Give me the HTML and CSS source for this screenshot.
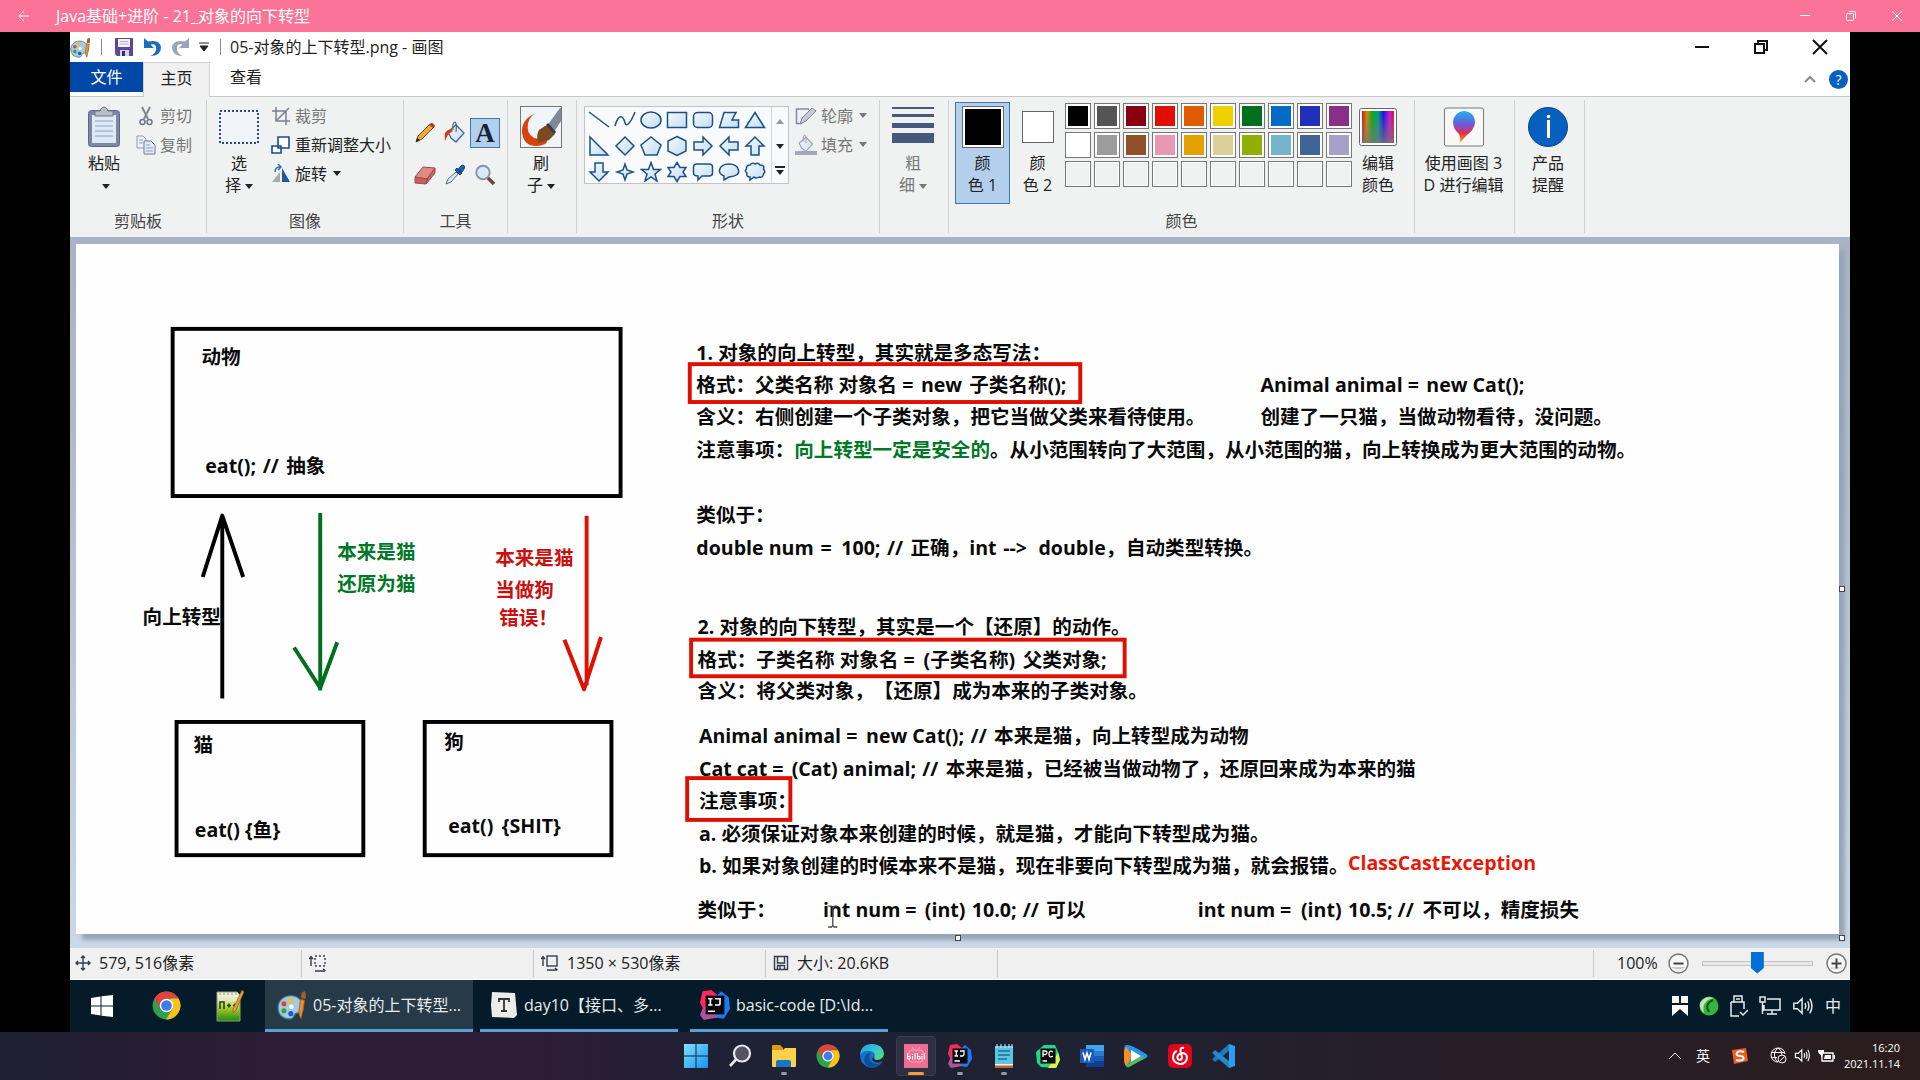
FILE: index.html
```html
<!DOCTYPE html>
<html lang="zh-CN">
<head>
<meta charset="utf-8">
<meta name="viewport" content="width=device-width, initial-scale=1">
<title>Java基础+进阶 - 21_对象的向下转型</title>
<link rel="stylesheet" href="styles.css">
</head>
<body>
<svg class="defs" aria-hidden="true">
  <defs>
    <linearGradient id="sky" x1="0" y1="0" x2="1" y2="1"><stop offset="0" stop-color="#f4fafd"/><stop offset="1" stop-color="#c4ddf0"/></linearGradient>
    <linearGradient id="rainbow"><stop offset="0" stop-color="#e01010"/><stop offset=".15" stop-color="#d09000"/><stop offset=".32" stop-color="#00b010"/><stop offset=".5" stop-color="#00a080"/><stop offset=".67" stop-color="#1010f0"/><stop offset=".85" stop-color="#d010e0"/><stop offset="1" stop-color="#e01040"/></linearGradient>
    <linearGradient id="greyfade" x1="0" y1="0" x2="0" y2="1"><stop offset="0" stop-color="#777" stop-opacity="0"/><stop offset="1" stop-color="#777" stop-opacity=".8"/></linearGradient>
    <linearGradient id="balloon" x1="0" y1="0" x2="0" y2="1"><stop offset="0" stop-color="#1cb6e8"/><stop offset=".4" stop-color="#6a5be0"/><stop offset=".7" stop-color="#e0304e"/><stop offset="1" stop-color="#ffb400"/></linearGradient>
    <linearGradient id="winblue" x1="0" y1="0" x2="1" y2="1"><stop offset="0" stop-color="#7fe0fc"/><stop offset="1" stop-color="#1494f4"/></linearGradient>
    <linearGradient id="edgeg" x1="0" y1="0" x2="1" y2="1"><stop offset="0" stop-color="#1c9be8"/><stop offset=".5" stop-color="#39c9d0"/><stop offset="1" stop-color="#5be069"/></linearGradient>
    <linearGradient id="npp" x1="0" y1="0" x2="0" y2="1"><stop offset="0" stop-color="#f4f6e8"/><stop offset=".3" stop-color="#dfe8b0"/><stop offset=".55" stop-color="#a8cc30"/><stop offset="1" stop-color="#1f8a10"/></linearGradient>
    <symbol id="chrome" viewBox="0 0 24 24">
      <circle cx="12" cy="12" r="11.5" fill="#2ba24c"/>
      <path d="M12 12 2 6.2A11.5 11.5 0 0 1 22 6.3L12 6.3Z" fill="#e0433a"/>
      <path d="M2 6.2 7 15 12 12 12 6.3 5 3Z" fill="#e0433a"/>
      <path d="M22 6.3A11.5 11.5 0 0 1 11.6 23.5L17 14.800 15 6.300Z" fill="#fbc116"/>
      <circle cx="12" cy="12" r="5.600" fill="#fff"/><circle cx="12" cy="12" r="4.400" fill="#3b7ded"/>
    </symbol>
    <symbol id="palette" viewBox="0 0 26 26">
      <path d="M12 5C5 5 1 10 1 15.500S5 25 11 25c4 0 3-3 5-4.500s7 0 7-5S18.500 5 12 5Z" fill="#9fcbe6" stroke="#4a7ea4"/>
      <circle cx="6" cy="12" r="2.200" fill="#e2452c"/><circle cx="11.500" cy="9" r="2.200" fill="#f2c31a"/><circle cx="6" cy="18" r="2.200" fill="#3a9f3c"/><circle cx="12" cy="20.500" r="2.200" fill="#2659b8"/><circle cx="12.500" cy="14.500" r="2" fill="#fff"/>
      <path d="M20.500 8 24 9 21 25Q18.500 22 19 18Z" fill="#e8912d" stroke="#9a5715" stroke-width=".7"/>
      <path d="M21 7Q20 2 24 1 26 4 24.300 8Z" fill="#a85b2a"/>
    </symbol>
    <symbol id="speaker" viewBox="0 0 24 24">
      <path d="M2 9H6L11 4V20L6 15H2Z M14 9Q16 12 14 15 M17 7Q20 12 17 17 M19.500 4Q24 12 19.500 20" fill="none" stroke="currentColor" stroke-width="1.600"/>
    </symbol>
    <symbol id="bucket" viewBox="0 0 24 24">
      <path d="M5 11 13 4 21 12 13 21 8 17Z" fill="url(#sky)" stroke="currentColor" stroke-width="1.300"/>
      <path d="M10 9Q9 2 12 1 14 2 13 11" fill="none" stroke="currentColor" stroke-width="1.200"/>
    </symbol>
    <symbol id="ij" viewBox="0 0 24 24">
      <path d="M2 1 9 0 14 4 10 8 3 16 0 10Z" fill="#fb2a63"/><path d="M17 1 23 6 24 15 19 23 12 22 10 8Z" fill="#1a79f4"/><path d="M2 15 8 10 14 22 3 24 0 20Z" fill="#b3529a"/>
      <path d="M4.500 4.500H19.500V19.500H4.500Z" fill="#050505"/>
      <path d="M6.500 7H10M8.300 7V12M6.500 12H10M12 7H16V10.500Q16 12 14.500 12H12M6.500 17H12" fill="none" stroke="#fff" stroke-width="1.300"/>
    </symbol>
  </defs>
</svg>

<header class="player-bar">
  <button class="bare" aria-label="返回"><svg width="12" height="12" viewBox="0 0 12 12" class="line"><path d="M11 6H1M6 1 1 6 6 11"/></svg></button>
  <h1 class="player-title">Java基础+进阶 - 21_对象的向下转型</h1>
  <div class="player-controls">
    <button class="bare" aria-label="最小化"><svg width="12" height="12" viewBox="0 0 12 12" class="line"><path d="M1 5.500H11"/></svg></button>
    <button class="bare" aria-label="还原"><svg width="12" height="12" viewBox="0 0 12 12" class="line"><rect x="1.500" y="3.500" width="7" height="7" rx="1"/><path d="M4 1.500H9.500Q10.500 1.500 10.500 3V8.500"/></svg></button>
    <button class="bare" aria-label="关闭"><svg width="12" height="12" viewBox="0 0 12 12" class="line"><path d="M1 1 11 11M11 1 1 11"/></svg></button>
  </div>
</header>

<main class="stage">
  <div class="paint-title">
    <svg width="21" height="21"><use href="#palette"/></svg>
    <i class="rule rule-a"></i>
    <button class="bare" aria-label="保存"><svg width="20" height="20" viewBox="0 0 20 20"><path d="M1 1H19V19H3L1 17Z" fill="#5e4796"/><path d="M4 2H16V10H4Z" fill="#f4f4fa"/><path d="M6 4.500H14M6 7H14" stroke="#b0accc"/><path d="M6 13H15V19H6Z" fill="#d8d4e8"/><path d="M8 14H11V19H8Z" fill="#3b2a6c"/></svg></button>
    <button class="bare" aria-label="撤消"><svg width="19" height="20" viewBox="0 0 19 20"><path d="M1 1V11H11L7.500 7.500Q14 6 13 13 12 17 7 19 18 19 18 10.500 17 2 5 4.500Z" fill="#1a6fb8"/></svg></button>
    <button class="bare" aria-label="重做"><svg width="19" height="20" viewBox="0 0 19 20"><path d="M18 1V11H8L11.500 7.500Q5 6 6 13 7 17 12 19 1 19 1 10.500 2 2 14 4.500Z" fill="#9aa4b8"/></svg></button>
    <button class="bare" aria-label="自定义快速访问工具栏"><svg width="10" height="10" viewBox="0 0 10 10"><path d="M0 1H10M1 4 5 9 9 4Z" stroke="#222" fill="#222"/></svg></button>
    <i class="rule rule-b"></i>
    <h2 class="file-title">05-对象的上下转型.png - 画图</h2>
    <div class="window-controls">
      <button class="bare" aria-label="最小化窗口"><svg width="16" height="16" viewBox="0 0 16 16" class="line line-dark"><path d="M1 8H15"/></svg></button>
      <button class="bare" aria-label="还原窗口"><svg width="16" height="16" viewBox="0 0 16 16" class="line line-dark"><path d="M2 5H11V14H2ZM5 5V2H14V11H11"/></svg></button>
      <button class="bare" aria-label="关闭窗口"><svg width="16" height="16" viewBox="0 0 16 16" class="line line-dark"><path d="M1 1 15 15M15 1 1 15"/></svg></button>
    </div>
  </div>

  <nav class="tabs">
    <button class="tab tab-file">文件</button>
    <button class="tab tab-active">主页</button>
    <button class="tab">查看</button>
    <div class="tabs-end">
      <button class="bare" aria-label="折叠功能区"><svg width="12" height="10" viewBox="0 0 12 10"><path d="M1 8 6 3 11 8" fill="none" stroke="#8a8a8a" stroke-width="2"/></svg></button>
      <button class="help" aria-label="帮助">?</button>
    </div>
  </nav>

  <div class="ribbon">
    <section class="group g-clip">
      <div class="body">
        <button class="big">
          <span class="pic"><svg width="36" height="42" viewBox="0 0 36 42"><rect x="2.500" y="4.500" width="31" height="36" rx="3" fill="#7b87a3" stroke="#5d6985"/><path d="M6 9H30V37H6Z" fill="#dfe8f6"/><path d="M9 15H27M9 20H27M9 25H27M9 30H27" stroke="#a9b9d6" stroke-width="1.500"/><path d="M9 5H14Q15 1 18 1T22 5H27V10H9Z" fill="#b7bfce" stroke="#6c7486"/></svg></span>
          <span>粘贴<br><i class="arrow"></i></span>
        </button>
        <div class="list">
          <button class="row dim"><svg width="20" height="20" viewBox="0 0 20 20"><path d="M6 1 12 13M14 1 8 13" stroke="#808698" stroke-width="2" fill="none"/><circle cx="6.500" cy="16" r="2.500" fill="none" stroke="#6f7588" stroke-width="1.500"/><circle cx="13.500" cy="16" r="2.500" fill="none" stroke="#6f7588" stroke-width="1.500"/></svg>剪切</button>
          <button class="row dim"><svg width="20" height="20" viewBox="0 0 20 20"><path d="M1 1H7L10 4V13H1Z" fill="#eef2fa" stroke="#8d98b3"/><path d="M8 6H15L19 10V19H8Z" fill="#e4eaf6" stroke="#6e7a98"/><path d="M3 5H7M3 8H7M10 10H14M10 13H17M10 16H17" stroke="#8d9bbc"/></svg>复制</button>
        </div>
      </div>
      <h3>剪贴板</h3>
    </section>

    <section class="group g-image">
      <div class="body">
        <button class="big">
          <span class="pic"><svg width="40" height="34" viewBox="0 0 40 34"><rect x="1" y="1" width="38" height="32" fill="#f0f3f8" stroke="#1d4f8c" stroke-width="2" stroke-dasharray="2 2"/></svg></span>
          <span>选<br>择<i class="arrow"></i></span>
        </button>
        <div class="list">
          <button class="row dim"><svg width="20" height="20" viewBox="0 0 20 20"><path d="M5 1V15H19M1 5H15V19M6 14 18 2" fill="none" stroke="#7a8090" stroke-width="1.500"/></svg>裁剪</button>
          <button class="row"><svg width="20" height="20" viewBox="0 0 20 20"><path d="M7 2H18V13H7ZM1 11H10V18H1Z" fill="#fff" stroke="#1b4c8a" stroke-width="1.600"/></svg>重新调整大小</button>
          <button class="row"><svg width="20" height="20" viewBox="0 0 20 20"><path d="M1 18 9 8V18Z" fill="#a3aab2"/><path d="M11 4V18H19Z" fill="#1b5a9c"/><path d="M4 8Q4 3 9 3M7 0 10 3 7 6" fill="none" stroke="#2f72bd" stroke-width="1.500"/></svg>旋转<i class="arrow"></i></button>
        </div>
      </div>
      <h3>图像</h3>
    </section>

    <section class="group g-tools">
      <div class="body tool-grid">
        <button class="tool" aria-label="铅笔"><svg width="22" height="22" viewBox="0 0 22 22"><path d="M2 20 4 14 16 2 20 5 8 17Z" fill="#f0a838" stroke="#6e4413"/><path d="M2 20 3 16 6 18Z" fill="#222"/><path d="M15 3 17 1Q20 1 21 4L19 6Z" fill="#a63c2c"/></svg></button>
        <button class="tool" aria-label="用颜色填充"><svg width="24" height="24" viewBox="0 0 24 24" class="steel"><use href="#bucket"/><path d="M2 20Q0 9 8 8L10 10Q5 12 2 20Z" fill="#d13d13"/></svg></button>
        <button class="tool tool-on" aria-label="文本">A</button>
        <button class="tool" aria-label="橡皮擦"><svg width="22" height="22" viewBox="0 0 22 22"><path d="M1 13 9 3 21 4 13 15Z" fill="#e08a86" stroke="#a04a48"/><path d="M1 13V19L12 20 13 15ZM13 15 21 4V9L12 20Z" fill="#c4605e" stroke="#a04a48"/></svg></button>
        <button class="tool" aria-label="颜色选取器"><svg width="22" height="22" viewBox="0 0 22 22"><path d="M2 20 4 15 12 8 14 10 7 18Z" fill="#dfe9f2" stroke="#5a6b80"/><path d="M11 6 13 4 18 9 16 11ZM14 6Q17 0 20 1.500 22 4 17 9Z" fill="#1d5fb0" stroke="#15437c"/></svg></button>
        <button class="tool" aria-label="放大镜"><svg width="22" height="22" viewBox="0 0 22 22"><path d="M13 13 20 20" stroke="#6b4636" stroke-width="3.500"/><circle cx="9" cy="8.500" r="6.700" fill="#d8eaf8" stroke="#8795a6" stroke-width="2"/></svg></button>
      </div>
      <h3>工具</h3>
    </section>

    <section class="group g-brush">
      <div class="body">
        <button class="big">
          <span class="pic"><svg width="42" height="42" viewBox="0 0 42 42"><rect x=".5" y=".5" width="41" height="41" fill="#eef4f8" stroke="#777"/><path d="M14 8Q1 14 2 27 4 40 16 40 31 39 26 31 20 34 14 32 6 27 8 18 9 12 14 8Z" fill="#d8420d"/><path d="M27 20 40 2H41V15L34 26Z" fill="#7d8797"/><path d="M25 20 31 20 35 28 29 34 18 37Q16 29 19 24Z" fill="#7b4a22"/><path d="M27 18 35 27" stroke="#333c4a" stroke-width="3"/></svg></span>
          <span>刷<br>子<i class="arrow"></i></span>
        </button>
      </div>
    </section>

    <section class="group g-shapes">
      <div class="body">
        <div class="gallery">
          <div class="shapes">
            <button aria-label="直线"><svg viewBox="0 0 22 22"><path d="M1 3 21 18"/></svg></button>
            <button aria-label="曲线"><svg viewBox="0 0 22 22"><path d="M1 17Q4 6 8 8C12 11 10 18 14 15Q17 13 21 3"/></svg></button>
            <button aria-label="椭圆形"><svg viewBox="0 0 22 22"><ellipse cx="11" cy="11" rx="10" ry="8"/></svg></button>
            <button aria-label="矩形"><svg viewBox="0 0 22 22"><path d="M1.500 3.500H20.500V18.500H1.500Z"/></svg></button>
            <button aria-label="圆角矩形"><svg viewBox="0 0 22 22"><rect x="1.500" y="3.500" width="19" height="15" rx="4"/></svg></button>
            <button aria-label="多边形"><svg viewBox="0 0 22 22"><path d="M6 3.500H18L14 11H20.500V18.500H1.500Z"/></svg></button>
            <button aria-label="三角形"><svg viewBox="0 0 22 22"><path d="M11 3.500 20.500 18.500H1.500Z"/></svg></button>
            <button aria-label="直角三角形"><svg viewBox="0 0 22 22"><path d="M2 2V20H20Z"/></svg></button>
            <button aria-label="菱形"><svg viewBox="0 0 22 22"><path d="M11 2 20 11 11 20 2 11Z"/></svg></button>
            <button aria-label="五边形"><svg viewBox="0 0 22 22"><path d="M11 2 21 10 17 20H5L1 10Z"/></svg></button>
            <button aria-label="六边形"><svg viewBox="0 0 22 22"><path d="M11 1.500 20 6V16L11 20.500 2 16V6Z"/></svg></button>
            <button aria-label="右箭头"><svg viewBox="0 0 22 22"><path d="M2 7H11V2L20 11 11 20V15H2Z"/></svg></button>
            <button aria-label="左箭头"><svg viewBox="0 0 22 22"><path d="M20 7H11V2L2 11 11 20V15H20Z"/></svg></button>
            <button aria-label="上箭头"><svg viewBox="0 0 22 22"><path d="M7 20V11H2L11 2 20 11H15V20Z"/></svg></button>
            <button aria-label="下箭头"><svg viewBox="0 0 22 22"><path d="M7 2V11H2L11 20 20 11H15V2Z"/></svg></button>
            <button aria-label="四角星形"><svg viewBox="0 0 22 22"><path d="M11 3 13 9 19 11 13 13 11 19 9 13 3 11 9 9Z"/></svg></button>
            <button aria-label="五角星形"><svg viewBox="0 0 22 22"><path d="M11 1.500 13.500 8.500H20.500L15 13 17 20 11 16 5 20 7 13 1.500 8.500H8.500Z"/></svg></button>
            <button aria-label="六角星形"><svg viewBox="0 0 22 22"><path d="M11 1.500 14 6.500H20L17 11 20 15.500H14L11 20.500 8 15.500H2L5 11 2 6.500H8Z"/></svg></button>
            <button aria-label="圆角矩形标注"><svg viewBox="0 0 22 22"><path d="M5 3H17Q20.500 3 20.500 6V12Q20.500 15 17 15H10L6 19V15Q1.500 15 1.500 12V6Q1.500 3 5 3Z"/></svg></button>
            <button aria-label="椭圆形标注"><svg viewBox="0 0 22 22"><path d="M6 15Q1 13 1.500 9 3 3 11 3T20.500 9 11 16L6 19Z"/></svg></button>
            <button aria-label="云形标注"><svg viewBox="0 0 22 22"><path d="M6 4Q8 1 11 3 14 1 16 4 21 4 19.500 8 22 11 19.500 13 19 17 15 16 12 18 10 16L6 19V16Q2 16 3 12 0 10 2.500 8 2 4 6 4Z"/></svg></button>
          </div>
          <div class="scroller">
            <button aria-label="向上滚动"><i class="arrow up"></i></button>
            <button aria-label="向下滚动"><i class="arrow"></i></button>
            <button aria-label="更多形状"><i class="arrow more"></i></button>
          </div>
        </div>
        <div class="list">
          <button class="row dim"><svg width="22" height="22" viewBox="0 0 22 22"><path d="M14 4H1.500V18.500H7" fill="none" stroke="#8287a6" stroke-width="1.500"/><path d="M5 19 7 13 17 3 21 6 11 16Z" fill="#c9c7dc" stroke="#8082a0"/></svg>轮廓<i class="arrow"></i></button>
          <button class="row dim"><svg width="22" height="22" viewBox="0 0 22 22" class="greyed"><use href="#bucket" width="20" height="20"/><path d="M0 17H22V21H0Z" fill="#8f96b4"/></svg>填充<i class="arrow"></i></button>
        </div>
      </div>
      <h3>形状</h3>
    </section>

    <section class="group g-width">
      <div class="body">
        <button class="big dim">
          <span class="pic"><svg width="42" height="42" viewBox="0 0 42 42"><path d="M0 1H42V3H0ZM0 8H42V11H0ZM0 17H42V22H0ZM0 27H42V37H0Z" fill="#46587d"/></svg></span>
          <span>粗<br>细<i class="arrow"></i></span>
        </button>
      </div>
    </section>

    <section class="group g-colors">
      <div class="body">
        <button class="big chosen"><span class="pic"><i class="ink ink-one"></i></span><span>颜<br>色 1</span></button>
        <button class="big second"><span class="pic"><i class="ink ink-two"></i></span><span>颜<br>色 2</span></button>
        <div class="palette">
          <button aria-label="黑色" style="background-color:#000"></button>
          <button aria-label="灰色-50%" style="background-color:#555"></button>
          <button aria-label="深红色" style="background-color:#880010"></button>
          <button aria-label="红色" style="background-color:#e01000"></button>
          <button aria-label="橙色" style="background-color:#e05c00"></button>
          <button aria-label="黄色" style="background-color:#f0d000"></button>
          <button aria-label="绿色" style="background-color:#00701c"></button>
          <button aria-label="青绿色" style="background-color:#006cc8"></button>
          <button aria-label="靛蓝色" style="background-color:#2030b8"></button>
          <button aria-label="紫色" style="background-color:#883088"></button>
          <button aria-label="白色" style="background-color:#fff"></button>
          <button aria-label="灰色-25%" style="background-color:#9c9c9c"></button>
          <button aria-label="褐色" style="background-color:#905028"></button>
          <button aria-label="玫瑰色" style="background-color:#e898b0"></button>
          <button aria-label="金色" style="background-color:#e4a000"></button>
          <button aria-label="浅黄色" style="background-color:#dcd098"></button>
          <button aria-label="酸橙色" style="background-color:#90b000"></button>
          <button aria-label="淡青绿色" style="background-color:#74b4cc"></button>
          <button aria-label="蓝灰色" style="background-color:#406498"></button>
          <button aria-label="淡紫色" style="background-color:#a8a0cc"></button>
          <button class="empty" aria-label="自定义 1"></button><button class="empty" aria-label="自定义 2"></button><button class="empty" aria-label="自定义 3"></button><button class="empty" aria-label="自定义 4"></button><button class="empty" aria-label="自定义 5"></button><button class="empty" aria-label="自定义 6"></button><button class="empty" aria-label="自定义 7"></button><button class="empty" aria-label="自定义 8"></button><button class="empty" aria-label="自定义 9"></button><button class="empty" aria-label="自定义 10"></button>
        </div>
        <button class="big"><span class="pic"><svg width="38" height="38" viewBox="0 0 38 38"><rect x=".5" y=".5" width="37" height="37" rx="2" fill="#fff" stroke="#666"/><path d="M3 3H35V35H3Z" fill="url(#rainbow)"/><path d="M3 3H35V35H3Z" fill="url(#greyfade)"/></svg></span><span>编辑<br>颜色</span></button>
      </div>
      <h3>颜色</h3>
    </section>

    <section class="group g-3d">
      <div class="body">
        <button class="big"><span class="pic"><svg width="40" height="40" viewBox="0 0 40 40"><rect x=".5" y="1" width="39" height="38" rx="2" fill="#f8f8f8" stroke="#777"/><path d="M20 4Q31 5 31 16 30 23 23 28 20 31 16 36 17 31 15 27 9 22 9 15 10 5 20 4Z" fill="url(#balloon)"/></svg></span><span>使用画图 3<br>D 进行编辑</span></button>
      </div>
    </section>

    <section class="group g-info">
      <div class="body">
        <button class="big"><span class="pic"><svg width="40" height="40" viewBox="0 0 40 40"><circle cx="20" cy="20" r="19.500" fill="#0560c0" stroke="#0a478a"/><path d="M19 13H22V31H19Z" fill="#fff"/><circle cx="20.500" cy="9.500" r="1.800" fill="#fff"/></svg></span><span>产品<br>提醒</span></button>
      </div>
    </section>
  </div>

  <div class="workspace">
    <div class="sheet">
      <svg class="drawing" viewBox="0 0 1350 528" role="img" aria-label="对象的上下转型">
        <g class="ink-black"><rect x="74" y="65" width="343" height="128"/><rect x="77" y="366" width="143" height="102"/><rect x="267" y="366" width="143" height="102"/><path d="M112 208V348M97 255 112 208 128 255"/></g>
        <path class="ink-green" d="M187 206V342M167 309 187 340 200 305"/>
        <path class="ink-red" d="M391 208V338M374 303 389 341 402 301"/>
        <text x="96" y="92">动物</text>
        <text x="99" y="175">eat(); <tspan x="143">//</tspan> <tspan x="161">抽象</tspan></text>
        <text x="51" y="291">向上转型</text>
        <text x="90" y="389">猫</text>
        <text x="91" y="454">eat() {鱼}</text>
        <text x="282" y="387">狗</text>
        <text x="285" y="451">eat() <tspan x="326">{SHIT}</tspan></text>
        <g class="green"><text x="200" y="241">本来是猫</text><text x="200" y="266">还原为猫</text></g>
        <g class="red"><text x="321" y="246">本来是猫</text><text x="321" y="270">当做狗</text><text x="324" y="292">错误！</text></g>

        <text x="475" y="89">1. 对象的向上转型，其实就是多态写法：</text>
        <text x="475" y="113">格式：父类名称 对象名 = <tspan x="647">new</tspan> <tspan x="684">子类名称();</tspan></text>
        <text x="475" y="138">含义：右侧创建一个子类对象，把它当做父类来看待使用。</text>
        <text x="475" y="163">注意事项：<tspan class="green">向上转型一定是安全的</tspan>。从小范围转向了大范围，从小范围的猫，向上转换成为更大范围的动物。</text>
        <text x="907" y="113">Animal animal = <tspan x="1034">new Cat();</tspan></text>
        <text x="907" y="138">创建了一只猫，当做动物看待，没问题。</text>
        <text x="475" y="213">类似于：</text>
        <text x="475" y="238">double num <tspan x="570">=</tspan> <tspan x="586">100;</tspan> <tspan x="621">//</tspan> <tspan x="639">正确，</tspan><tspan x="684">int</tspan> <tspan x="710">--&gt;</tspan> <tspan x="737">double，</tspan><tspan x="804">自动类型转换。</tspan></text>

        <text x="476" y="299">2. 对象的向下转型，其实是一个【还原】的动作。</text>
        <text x="476" y="324">格式：子类名称 对象名 = <tspan x="649">(子类名称)</tspan> <tspan x="725">父类对象;</tspan></text>
        <text x="476" y="348">含义：将父类对象，【还原】成为本来的子类对象。</text>
        <text x="477" y="382">Animal animal = <tspan x="605">new Cat();</tspan> <tspan x="685">//</tspan> <tspan x="703">本来是猫，向上转型成为动物</tspan></text>
        <text x="477" y="407">Cat cat = <tspan x="548">(Cat) animal;</tspan> <tspan x="648">//</tspan> <tspan x="666">本来是猫，已经被当做动物了，还原回来成为本来的猫</tspan></text>
        <text x="477" y="432">注意事项：</text>
        <text x="477" y="457">a. 必须保证对象本来创建的时候，就是猫，才能向下转型成为猫。</text>
        <text x="477" y="482">b. 如果对象创建的时候本来不是猫，现在非要向下转型成为猫，就会报错。</text>
        <text x="974" y="479" class="bright">ClassCastException</text>
        <text x="476" y="515">类似于：</text>
        <text x="572" y="515">int num <tspan x="635">=</tspan> <tspan x="650">(int)</tspan> <tspan x="686">10.0;</tspan> <tspan x="725">//</tspan> <tspan x="743">可以</tspan></text>
        <text x="859" y="515">int num <tspan x="922">=</tspan> <tspan x="938">(int)</tspan> <tspan x="974">10.5;</tspan> <tspan x="1012">//</tspan> <tspan x="1031">不可以，精度损失</tspan></text>
        <g class="ink-red"><rect x="470" y="92" width="299" height="29"/><rect x="471" y="303" width="332" height="28"/><rect x="468" y="409" width="79" height="32"/></g>
        <path class="ibeam" d="M576 507H578.500L579.500 508 580.500 507H583M579.500 508V522M576 523H578.500L579.500 522 580.500 523H583"/>
      </svg>
      <i class="handle handle-e"></i><i class="handle handle-s"></i><i class="handle handle-se"></i>
    </div>
  </div>

  <footer class="status">
    <div class="cell"><svg width="16" height="16" viewBox="0 0 16 16" class="mini"><path d="M8 1V15M1 8H15M6 3 8 1 10 3M6 13 8 15 10 13M3 6 1 8 3 10M13 6 15 8 13 10"/></svg>579, 516像素</div>
    <div class="cell"><svg width="18" height="18" viewBox="0 0 18 18" class="mini"><path d="M2 3V12M0 5 2 2.500 4 5M6 17H16M14 15 16.500 17"/><rect x="6" y="2" width="10" height="10" stroke-dasharray="2 2"/></svg></div>
    <div class="cell"><svg width="18" height="18" viewBox="0 0 18 18" class="mini"><path d="M2 3V12M0 5 2 2.500 4 5M6 16H16M14 14 16.500 16"/><rect x="6" y="2" width="10" height="10"/></svg>1350 × 530像素</div>
    <div class="cell"><svg width="16" height="16" viewBox="0 0 16 16" class="mini"><path d="M1.500 1.500H14.500V14.500H1.500ZM4.500 2V8H11.500V2M4.500 14V10.500H11.500V14M7 11V14"/></svg>大小: 20.6KB</div>
    <div class="cell cell-rest"></div>
    <div class="zoom">
      <label for="zoom">100%</label>
      <button class="bare" aria-label="缩小"><svg width="21" height="21" viewBox="0 0 21 21"><circle cx="10.500" cy="10.500" r="9.500" fill="#f7f7f7" stroke="#777" stroke-width="1.500"/><path d="M3 14Q10 19 18 14Z" fill="#ccc"/><path d="M5.500 10.500H15.500" stroke="#444" stroke-width="2"/></svg></button>
      <input id="zoom" type="range" min="0" max="100" value="50">
      <button class="bare" aria-label="放大"><svg width="21" height="21" viewBox="0 0 21 21"><circle cx="10.500" cy="10.500" r="9.500" fill="#f7f7f7" stroke="#777" stroke-width="1.500"/><path d="M3 14Q10 19 18 14Z" fill="#ddd"/><path d="M5.500 10.500H15.500M10.500 5.500V15.500" stroke="#444" stroke-width="2"/></svg></button>
    </div>
  </footer>

  <div class="taskbar">
    <button class="pin" aria-label="开始"><svg width="22" height="22" viewBox="0 0 22 22" fill="#fff"><path d="M0 3 9.500 1.500V10.500H0ZM10.500 1.300 22 0V10.500H10.500ZM0 11.500H9.500V20.500L0 19ZM10.500 11.500H22V22L10.500 20.700Z"/></svg></button>
    <button class="pin" aria-label="Chrome"><svg width="29" height="29"><use href="#chrome"/></svg></button>
    <button class="pin" aria-label="Notepad++"><svg width="28" height="32" viewBox="0 0 28 32"><path d="M1 2H21L24 5V31H1Z" fill="url(#npp)" stroke="#8fa070"/><path d="M4 3V5M8 3V5M12 3V5M16 3V5M20 3V5" stroke="#889"/><path d="M4 19V12H8V19M11 15.500H15M13 13.500V17.500M17 15.500H21M19 13.500V17.500" stroke="#273a12" fill="none" stroke-width="1.500"/><path d="M26 0 28 2 20 20 17 23 17 19Z" fill="#e5a32d" stroke="#7d4f12" stroke-width=".6"/></svg></button>
    <button class="task task-on"><svg width="30" height="30"><use href="#palette"/></svg>05-对象的上下转型...</button>
    <button class="task"><svg width="28" height="28" viewBox="0 0 28 28"><path d="M2 1 25 2 27 24 24 27 2 26 1 14Z" fill="#ecebea"/><path d="M9 11V8H19V11M14 8V20M11 20H17" stroke="#333" stroke-width="1.800" fill="none"/></svg>day10【接口、多...</button>
    <button class="task"><svg width="30" height="30"><use href="#ij"/></svg>basic-code [D:\Id...</button>
    <div class="tray">
      <svg width="16" height="20" viewBox="0 0 16 20" fill="#fff"><path d="M0 0H7V7H0ZM9 0H16V7H9ZM0 9H16V20L8 13 0 20Z"/></svg>
      <svg width="20" height="20" viewBox="0 0 20 20"><circle cx="10" cy="10" r="9.500" fill="#35b33a"/><path d="M15 2Q2 4 5 17 0 13 1 7 6-1 15 2Z" fill="#c5dfb8"/><path d="M14 4Q5 8 10 16" fill="none" stroke="#0b5a16" stroke-width="2"/></svg>
      <svg width="18" height="22" viewBox="0 0 18 22" class="tray-line"><path d="M4 7V1H12V7M1 7H14V14M1 7V21H9M10 17 13 20 18 15M6 4H10"/></svg>
      <svg width="22" height="20" viewBox="0 0 22 20" class="tray-line"><path d="M8 3H21V14H5V9M13 14V18M8 18H18M1 1H6V6H1ZM3.500 6V18"/></svg>
      <svg width="22" height="22"><use href="#speaker"/></svg>
      <span class="ime">中</span>
    </div>
  </div>
</main>

<footer class="dock">
  <nav class="apps">
    <button class="app" aria-label="开始"><svg width="24" height="24" viewBox="0 0 24 24" fill="url(#winblue)"><path d="M0 0H11.500V11.500H0ZM12.500 0H24V11.500H12.500ZM0 12.500H11.500V24H0ZM12.500 12.500H24V24H12.500Z"/></svg></button>
    <button class="app" aria-label="搜索"><svg width="24" height="24" viewBox="0 0 24 24"><circle cx="14" cy="9.500" r="8" fill="#545363" stroke="#e8e8e8" stroke-width="2.200"/><path d="M8 15.500 2 22" stroke="#e8e8e8" stroke-width="2.600"/></svg></button>
    <button class="app open" aria-label="文件资源管理器"><svg width="24" height="24" viewBox="0 0 24 24"><path d="M0 2Q0 1 1 1H8L11 4V9H0Z" fill="#e09b08"/><path d="M0 6H11L13 4H24V22Q24 23 23 23H1Q0 23 0 22Z" fill="#ffd04b"/><path d="M4 23V18Q4 16 6 16H17Q19 16 19 18V23Z" fill="#1576c4"/></svg></button>
    <button class="app" aria-label="Chrome"><svg width="24" height="24"><use href="#chrome"/></svg></button>
    <button class="app" aria-label="Edge"><svg width="24" height="24" viewBox="0 0 24 24"><circle cx="12" cy="12" r="11.800" fill="#1572c8"/><path d="M0 11Q1 0 12 0 23 0 24 10 23 16 17 16 13 16 14.500 13 16 8 10 7 4 6 0 11Z" fill="url(#edgeg)"/><path d="M10 9Q7 19 17 20 20 20 22 18 16 25 10 23 2 20 5 12 7 9 10 9Z" fill="#0d4f9e"/><path d="M14.500 13Q13 16 17 16 22 16 24 11L23 17Q17 20 13 17 11 14 14.500 13Z" fill="#202234"/></svg></button>
    <button class="app current" aria-label="哔哩哔哩"><svg width="24" height="24" viewBox="0 0 24 24"><path d="M0 0H24V24H0Z" fill="#ee6f91"/><rect x="5" y="6" width="14" height="12" rx="3" fill="none" stroke="#f9a3b8"/><path d="M8 3 10 6M16 3 14 6" stroke="#f9a3b8"/><path d="M3.500 9V15H6V12.500H3.500M8.500 12V15.500M8.500 10V11M11 9V15.500M13.500 9V15H16V12.500H13.500M18 12V15.500M18 10V11M20.500 9V15.500" stroke="#fff" fill="none"/></svg></button>
    <button class="app open" aria-label="IntelliJ IDEA"><svg width="24" height="24"><use href="#ij"/></svg></button>
    <button class="app open" aria-label="记事本"><svg width="20" height="24" viewBox="0 0 20 24"><path d="M1 2H19V22H1Z" fill="#5cc5e2"/><path d="M1 21H19V24H1Z" fill="#b8692c"/><path d="M1 20H19V21.500H1Z" fill="#f3f3f3"/><path d="M4 7H16M4 11H16M4 15H13" stroke="#17708e" stroke-width="1.600"/><path d="M3 0V4M7 0V4M11 0V4M15 0V4M18 0V4" stroke="#d5f2fa"/></svg></button>
    <button class="app" aria-label="PyCharm"><svg width="24" height="24" viewBox="0 0 24 24"><path d="M0 8 8 1 19 1 23 10 24 16 20 24 5 23 1 19Z" fill="#21d789"/><path d="M12 24 22 9 24 16 20 24Z" fill="#dff04a"/><path d="M4.500 4.500H19.500V19.500H4.500Z" fill="#050505"/><path d="M7 13V7H9.500Q11 7 11 8.500T9.500 10.500H7M17 8Q13 5.500 13 10T17 12M6.500 17H11" stroke="#fff" stroke-width="1.300" fill="none"/></svg></button>
    <button class="app" aria-label="Word"><svg width="24" height="24" viewBox="0 0 24 24"><path d="M6 1H24V8H6Z" fill="#41a5ee"/><path d="M6 7H24V13H6Z" fill="#2b7cd3"/><path d="M6 12H24V18H6Z" fill="#185abd"/><path d="M6 17H24V23H6Z" fill="#103f91"/><path d="M0 5H14V19H0Z" fill="#185abd"/><path d="M3 8.500 5 15.500 7 9 9 15.500 11 8.500" stroke="#fff" stroke-width="1.600" fill="none"/></svg></button>
    <button class="app" aria-label="腾讯视频"><svg width="24" height="24" viewBox="0 0 24 24"><path d="M2 1Q7 0 22 10 25 12 22 14L5 23Q0 24 0 12T2 1Z" fill="#2296f0"/><path d="M2 3Q7 8 7 12T2 22Q0 20 0 12T2 3Z" fill="#ff8d1a"/><path d="M2 22Q9 17 18 12L20 14 5 23Q3 24 2 22Z" fill="#62c22c"/><path d="M7 6 17 12 7 18Z" fill="#fff"/></svg></button>
    <button class="app" aria-label="网易云音乐"><svg width="24" height="24" viewBox="0 0 24 24"><rect width="24" height="24" rx="5" fill="#e2001b"/><path d="M16 4Q12 3 12.500 7L14 13Q14 16 11.500 16 9 15.500 9.500 12.500 10 10 14 9 19 9 19 14 18 20 12 20 5 19 5 13 5.500 8 9 7" fill="none" stroke="#fff" stroke-width="2"/></svg></button>
    <button class="app" aria-label="VS Code"><svg width="24" height="24" viewBox="0 0 24 24"><path d="M17 0 23 2V22L17 24Z" fill="#2a9df4"/><path d="M17 0V7L3 18 0 15Z" fill="#1b79be"/><path d="M17 24V17L3 6 0 9Z" fill="#2489ca"/></svg></button>
  </nav>
  <div class="system">
    <button class="bare" aria-label="显示隐藏的图标"><svg width="14" height="10" viewBox="0 0 14 10" class="line"><path d="M1 8 7 2 13 8"/></svg></button>
    <span class="lang">英</span>
    <svg width="18" height="18" viewBox="0 0 18 18"><path d="M1 3 15 1 17 14 3 17Z" fill="#f05a24"/><path d="M13 5Q6 3 5.500 7 6 9 9 9 13 9 12.500 12 11 14.500 5 13" fill="none" stroke="#fff" stroke-width="2"/></svg>
    <div class="indicators">
      <svg width="17" height="17" viewBox="0 0 17 17" class="line"><path d="M8 1A7 7 0 1 0 8 15M8 1Q3 5 5 11 6 14 8 15M8 1Q12 3 12 8M1.500 5.500H14.500M1.500 10.500H7M8 1Q14 1 15 7"/><circle cx="12" cy="12" r="4"/><path d="M9.500 14.500 14.500 9.500"/></svg>
      <svg width="17" height="17"><use href="#speaker"/></svg>
      <svg width="17" height="14" viewBox="0 0 17 14"><path d="M4 4H15V12H4Z" fill="none" stroke="#fff" stroke-width="1.300"/><path d="M7 6H13V10H6Z M15.500 6H17V10H15.500Z M0 1H6V4Q4 6 3 9V6Q0 5 0 1Z" fill="#fff"/></svg>
    </div>
    <time class="clock">16:20<br>2021.11.14</time>
  </div>
</footer>
</body>
</html>
```

FILE: styles.css
```css
*, *::before, *::after { box-sizing: border-box; }

body {
  margin: 0;
  min-height: 100vh;
  display: flex;
  flex-direction: column;
  background: #000;
  color: #222;
  font: 16px/22px "Open Sans", "Noto Sans CJK SC", sans-serif;
  text-spacing-trim: space-all;
}

button {
  margin: 0;
  padding: 0;
  border: 0;
  background: none;
  color: inherit;
  font: inherit;
}

svg { display: block; flex: none; }
.defs { position: absolute; width: 0; height: 0; }
h1, h2, h3 { margin: 0; font-size: 16px; font-weight: 400; }
.bare { display: flex; align-items: center; justify-content: center; }
.line { fill: none; stroke: #fff; }
.line-dark { stroke: #111; stroke-width: 2; }

/* player title bar */
.player-bar {
  display: flex;
  align-items: center;
  height: 32px;
  padding: 0 17px 0 18px;
  background: #fc7398;
  color: #fff;
}
.player-title { margin-left: 26px; }
.player-controls { display: flex; gap: 34px; margin-left: auto; }

/* paint window */
.stage { margin: 0 70px; background: #fff; }

.paint-title {
  display: flex;
  align-items: center;
  height: 30px;
  padding: 0 22px 0 0;
}
.paint-title > .bare { margin-right: 9px; }
.paint-title > .bare:nth-of-type(4) { margin-right: 11px; }
.rule { width: 1px; height: 16px; background: #888; }
.rule-a { margin: 0 12px 0 10px; }
.rule-b { margin-right: 9px; }
.window-controls { display: flex; gap: 43px; margin-left: auto; }

.tabs { display: flex; height: 34px; }
.tab { width: 72px; padding-bottom: 4px; }
.tab-file { width: 73px; height: 30px; padding: 0; background: #0048a8; color: #fff; }
.tab-active {
  width: 67px;
  height: 35px;
  margin-bottom: -1px;
  border: 1px solid #d0d0d0;
  border-bottom: 0;
  background: #f0f0f0;
  z-index: 1;
}
.tabs-end { display: flex; align-items: center; gap: 13px; margin-left: auto; padding-right: 2px; }
.help {
  width: 19px;
  height: 19px;
  border-radius: 50%;
  background: #0560c0;
  color: #fff;
  font-size: 14px;
  line-height: 19px;
}

.ribbon {
  display: flex;
  height: 142px;
  margin-bottom: -1px;
  padding: 3px 0 4px;
  border-top: 1px solid #c8c8c8;
  border-bottom: 1px solid #c8ccd4;
  background: #f0f1f1;
}
.group { display: flex; flex-direction: column; border-right: 1px solid #d0d0d2; }
.group h3 { color: #444; line-height: 24px; text-align: center; }
.body { display: flex; align-items: flex-start; height: 110px; }
.g-clip { width: 137px; }
.g-clip .body { padding-left: 10px; }
.g-image { width: 197px; }
.g-image .body { padding-left: 8px; }
.g-tools { width: 104px; }
.g-brush { width: 69px; }
.g-brush .big, .g-width .big, .g-info .big { width: 66px; }
.g-shapes { width: 303px; }
.g-shapes .body { padding: 6px 0 0 7px; }
.g-width { width: 69px; }
.g-colors { width: 466px; }
.g-colors .body { padding: 2px 0 0 6px; }
.g-3d { width: 100px; }
.g-3d .big { width: 97px; }
.g-info { width: 70px; }

.big {
  display: flex;
  flex-direction: column;
  align-items: center;
  gap: 4px;
  width: 48px;
  padding-top: 6px;
  text-align: center;
}
.pic { display: flex; align-items: center; justify-content: center; height: 42px; }
.dim { color: #777; }
.arrow {
  display: inline-block;
  border: 4px solid transparent;
  border-top: 5px solid currentColor;
  border-bottom: 0;
  vertical-align: middle;
}
.big .arrow { margin-left: 4px; }
.row .arrow { margin-left: 2px; }

.list { display: flex; flex-direction: column; padding: 1px 0 0 8px; }
.g-shapes .list { margin-top: -6px; padding-left: 6px; }
.row { display: flex; align-items: center; gap: 4px; height: 29px; }

.tool-grid {
  display: grid;
  grid-template-columns: repeat(3, 30px);
  grid-auto-rows: 42px;
  align-items: center;
  padding: 12px 0 0 6px;
}
.tool { display: flex; align-items: center; justify-content: center; height: 30px; }
.tool-on {
  border: 1px solid #3c78b8;
  background: #b4cfec;
  color: #14263c;
  font: bold 27px/28px "Liberation Serif", serif;
}
.steel { color: #46688c; }
.greyed { color: #8287a6; opacity: .8; }

.gallery { display: flex; width: 205px; height: 78px; border: 1px solid #c0c4ca; background: #f8fafc; }
.shapes { display: grid; grid-template-columns: repeat(7, 26px); grid-auto-rows: 26px; padding-left: 1px; width: 186px; }
.shapes button { display: flex; align-items: center; justify-content: center; }
.shapes svg { width: 22px; height: 22px; fill: url(#sky); stroke: #1a5088; stroke-width: 1.5; }
.shapes button:nth-child(-n+2) svg { fill: none; }
.scroller { flex: 1; display: grid; border-left: 1px solid #d0d4d8; }
.scroller .up { transform: rotate(180deg); color: #999; }
.scroller .more { position: relative; }
.scroller .more::before { content: ""; position: absolute; left: -5px; top: -9px; width: 10px; height: 2px; background: currentColor; }

.chosen { width: 55px; height: 102px; padding-top: 3px; border: 1px solid #3c78b8; background: #b4cfec; }
.second { width: 55px; padding-top: 4px; }
.g-colors .big:last-child { padding-top: 4px; width: 52px; }
.ink { border: 1px solid #666; }
.ink-one { width: 42px; height: 42px; background: #000; box-shadow: inset 0 0 0 2px #fff; }
.ink-two { width: 32px; height: 32px; background: #fff; }
.palette { display: grid; grid-template-columns: repeat(10, 26px); gap: 3px; padding-top: 1px; }
.palette button { height: 26px; border: 1px solid #777; box-shadow: inset 0 0 0 2px #fff; }
.palette .empty { box-shadow: inset 0 0 0 1px #fff; }

.workspace {
  padding: 7px 11px 14px 6px;
  background: linear-gradient(#a9b3c5, #b3bccf 35%, #cbd8e7);
}
.sheet { position: relative; background: #fefefe; box-shadow: 6px 6px 4px #98a4b8; }
.drawing { width: 100%; height: auto; }
.drawing text { font-size: 15px; font-weight: 700; fill: #0a0a0a; white-space: pre; }
.ink-black, .ink-green, .ink-red { fill: none; stroke-width: 3; }
.drawing > path, .ink-black path { stroke-linejoin: round; }
.ink-black { stroke: #000; }
.ink-green { stroke: #00701c; }
.ink-red { stroke: #e01000; }
.drawing .green, .drawing .green text { fill: #007828; }
.drawing .red text { fill: #cc1010; }
.drawing .bright { fill: #e81808; }
.ibeam { fill: none; stroke: #444; }
.handle { position: absolute; width: 6px; height: 6px; border: 1px solid #445; background: #fff; }
.handle-e { right: -6px; top: calc(50% - 3px); }
.handle-s { bottom: -7px; left: calc(50% - 3px); }
.handle-se { right: -6px; bottom: -7px; }

.status { display: flex; height: 32px; padding: 2px 0; background: #f0f0f0; border-bottom: 1px solid #fff; }
.cell { display: flex; align-items: center; gap: 8px; width: 232px; padding-left: 5px; border-right: 1px solid #c8c8c8; }
.cell + .cell { padding-left: 7px; }
.cell-rest { flex: 1; }
.mini { fill: none; stroke: #333c50; stroke-width: 1.4; }
.zoom { display: flex; align-items: center; gap: 10px; width: 256px; padding: 0 3px 0 23px; }
#zoom { appearance: none; flex: 1; min-width: 0; height: 24px; margin: 0 3px; background: none; }
#zoom::-webkit-slider-runnable-track { height: 5px; border: 1px solid #c4c4c4; background: #e8e8e8; }
#zoom::-webkit-slider-thumb {
  appearance: none;
  width: 13px;
  height: 22px;
  margin-top: -10px;
  background: #0070d8;
  clip-path: polygon(0 0, 100% 0, 100% 75%, 50% 100%, 0 75%);
}

/* recorded desktop's taskbar */
.taskbar { display: flex; height: 52px; background: #051b29; color: #e8edf0; }
.pin { display: flex; align-items: center; justify-content: center; width: 64px; }
.task {
  display: flex;
  align-items: center;
  gap: 6px;
  width: 198px;
  margin-right: 12px;
  padding: 2px 0 0 10px;
  border-bottom: 3px solid #5aa0d8;
  white-space: nowrap;
}
.task-on { width: 208px; margin: 0 7px 0 3px; padding-left: 12px; background: #263a47; }
.tray { display: flex; align-items: center; gap: 11px; margin-left: auto; padding-right: 9px; }
.tray-line { fill: none; stroke: #e8edf0; stroke-width: 1.5; }

/* outer taskbar */
.dock {
  flex: none;
  display: grid;
  grid-template-columns: 1fr auto 1fr;
  align-items: center;
  height: 48px;
  background: linear-gradient(90deg, #1f2033, #2d1c33 14%, #2d1c33 28%, #1f2135 38%, #1f2232 55%, #271f28 75%, #2a1d1f);
  color: #fff;
}
.apps { grid-column: 2; display: flex; gap: 4px; }
.app { position: relative; display: flex; align-items: center; justify-content: center; width: 40px; height: 40px; }
.current { border: 1px solid #3c3c50; border-radius: 4px; background: #2e2f42; }
.open::after, .current::after {
  content: "";
  position: absolute;
  bottom: 1px;
  width: 6px;
  height: 3px;
  border-radius: 2px;
  background: #9a9aa6;
}
.current::after { bottom: 0; width: 16px; background: #ff9a3c; }
.system { display: flex; align-items: center; justify-content: flex-end; padding-right: 20px; }
.lang { margin: 0 21px 0 14px; font-size: 14px; }
.indicators { display: flex; align-items: center; gap: 7px; margin: 0 9px 0 21px; }
.clock { font-size: 11px; line-height: 16px; text-align: right; }
```
